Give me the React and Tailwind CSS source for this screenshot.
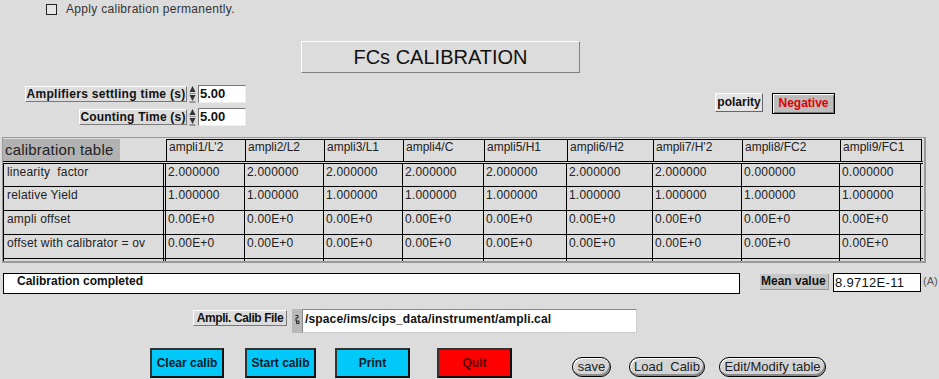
import React from "react";

const cols = [
  { name: "ampli1/L'2", w: 79, lin: "2.000000" },
  { name: "ampli2/L2", w: 79, lin: "2.000000" },
  { name: "ampli3/L1", w: 79, lin: "2.000000" },
  { name: "ampli4/C", w: 81, lin: "2.000000" },
  { name: "ampli5/H1", w: 83, lin: "2.000000" },
  { name: "ampli6/H2", w: 86, lin: "2.000000" },
  { name: "ampli7/H'2", w: 89, lin: "2.000000" },
  { name: "ampli8/FC2", w: 98, lin: "0.000000" },
  { name: "ampli9/FC1", w: 82, lin: "0.000000" },
];

const rows = [
  { label: "linearity  factor", key: "lin" },
  { label: "relative Yield", key: "yield" },
  { label: "ampli offset", key: "off" },
  { label: "offset with calibrator = ov", key: "ov" },
];

const cellValue = (c, key) => {
  if (key === "lin") return c.lin;
  if (key === "yield") return "1.000000";
  return "0.00E+0";
};

const Spinner = () => (
  <svg width="7" height="18" viewBox="0 0 7 18" className="mx-[2px]">
    <polygon points="3.5,1 6.5,7 0.5,7" fill="#333" />
    <rect x="0.5" y="8" width="6" height="1" fill="#888" />
    <polygon points="0.5,10 6.5,10 3.5,16" fill="#333" />
    <rect x="0.5" y="16.5" width="6" height="1" fill="#555" />
  </svg>
);

const Bevel = ({ children, className = "" }) => (
  <div className={`whitespace-nowrap overflow-hidden border border-t-white border-l-white border-b-[#7a7a7a] border-r-[#7a7a7a] ${className}`}>
    {children}
  </div>
);

const NumInput = ({ value }) => (
  <div className="w-[48px] h-[18px] bg-white border border-t-[#777] border-l-[#777] border-b-[#eee] border-r-[#eee] text-[13px] font-bold leading-[16px] pl-[1px] text-[#111]">
    {value}
  </div>
);

const BigBtn = ({ label, w, red }) => (
  <div
    className={`h-[30px] border-2 border-t-[#333] border-l-[#333] border-b-[#111] border-r-[#111] flex items-center justify-center text-[12px] font-bold ${
      red ? "bg-[#ff0000] text-[#5a0000]" : "bg-[#00c8f8] text-[#0a1a2a]"
    }`}
    style={{ width: w }}
  >
    {label}
  </div>
);

const RoundBtn = ({ label, w }) => (
  <div
    className="h-[20px] rounded-full border border-black bg-[#d4d4d4] shadow-[inset_-1px_-2px_0_#8a8a8a,inset_1px_1px_0_#fff] flex items-center justify-center text-[13px] text-[#222] whitespace-pre"
    style={{ width: w }}
  >
    {label}
  </div>
);

export default function App() {
  return (
    <div className="w-[939px] h-[379px] bg-[#dcdcdc] overflow-hidden font-['Liberation_Sans',Arial,sans-serif] text-[#222] flex flex-col">
      {/* checkbox */}
      <div className="h-[16px] flex items-center pl-[46px] pt-[2px]">
        <div className="w-[11px] h-[11px] border border-[#222] bg-[#e6e6e6]" />
        <span className="ml-[9px] text-[12px] tracking-[0.3px] text-[#333]">Apply calibration permanently.</span>
      </div>

      {/* title */}
      <div className="mt-[25px] ml-[301px] w-[279px] h-[32px] border border-t-white border-l-white border-b-[#808080] border-r-[#808080] flex items-center justify-center text-[20px] text-[#111]">
        FCs CALIBRATION
      </div>

      {/* settings */}
      <div className="mt-[12px] flex">
        <div className="w-[246px] flex flex-col items-end gap-[5px]">
          <div className="flex items-center h-[18px]">
            <Bevel className="w-[162px] h-[16px] text-center text-[12px] font-bold leading-[14px] tracking-[0.3px] text-[#111]">Amplifiers settling time (s)</Bevel>
            <Spinner />
            <NumInput value="5.00" />
          </div>
          <div className="flex items-center h-[18px]">
            <Bevel className="w-[108px] h-[16px] text-center text-[12px] font-bold leading-[14px] tracking-[0.2px] text-[#111]">Counting Time (s)</Bevel>
            <Spinner />
            <NumInput value="5.00" />
          </div>
        </div>
        <div className="ml-[469px] mt-[8px] flex items-start">
          <div className="h-[19px] w-[48px] bg-[#e4e4e4] border border-t-white border-l-white border-b-[#666] border-r-[#666] text-[12px] font-bold leading-[17px] text-center text-[#111]">
            polarity
          </div>
          <div className="ml-[9px] h-[21px] w-[63px] bg-[#bdbdbd] border border-black shadow-[inset_1px_1px_0_#fff,inset_-1px_-1px_0_#777] text-[12px] font-bold leading-[19px] text-center text-[#e00000]">
            Negative
          </div>
        </div>
      </div>

      {/* table */}
      <div className="mt-[11px] ml-[2px] w-[924px] h-[126px] border border-[#9a9a9a] border-r-2 border-b-2 overflow-hidden text-[12px] text-[#222]">
        <div className="flex h-[23px] pt-[1px]">
          <div className="w-[163px] h-[22px]">
            <div className="w-[117px] h-[22px] bg-[#b2b2b2] text-[15px] leading-[22px] pl-[2px] text-[#222] tracking-[0.2px]">
              calibration table
            </div>
          </div>
          {cols.map((c, i) => (
            <div
              key={c.name}
              className={`h-[22px] border-l border-t border-black pl-[2px] leading-[15px] ${i === cols.length - 1 ? "border-r" : ""}`}
              style={{ width: c.w }}
            >
              {c.name}
            </div>
          ))}
        </div>
        <div className="h-[3px] w-[920px] border-t border-b border-black" />
        {rows.map((r, ri) => (
          <div key={r.key} className={`flex ${ri === 0 ? "h-[23px]" : "h-[24px]"} w-[920px] border-b border-black`}>
            <div className="w-[160px] border-l border-black pl-[3px] leading-[17px] whitespace-pre tracking-[0.2px]">{r.label}</div>
            <div className="w-[3px] border-l border-r border-black" />
            {cols.map((c, i) => (
              <div
                key={c.name}
                className={`pl-[2px] leading-[17px] tracking-[0.2px] ${i === 0 ? "" : "border-l border-black"} ${i === cols.length - 1 ? "border-r border-black" : ""}`}
                style={{ width: i === 0 ? c.w - 1 : c.w }}
              >
                {cellValue(c, r.key)}
              </div>
            ))}
          </div>
        ))}
        <div className="flex h-[4px] w-[920px]">
          <div className="w-[160px] border-l border-black" />
          <div className="w-[3px] border-l border-r border-black" />
          {cols.map((c, i) => (
            <div
              key={c.name}
              className={`${i === 0 ? "" : "border-l border-black"} ${i === cols.length - 1 ? "border-r border-black" : ""}`}
              style={{ width: i === 0 ? c.w - 1 : c.w }}
            />
          ))}
        </div>
      </div>

      {/* status */}
      <div className="mt-[10px] flex items-start">
        <div className="ml-[3px] w-[737px] h-[21px] bg-white border border-black text-[12px] font-bold leading-[14px] pl-[13px] text-[#111]">
          Calibration completed
        </div>
        <div className="ml-[20px] mt-[1px] h-[16px] w-[69px] bg-[#c6c6c6] border-r border-b border-[#999] text-[12px] font-bold leading-[15px] pl-[1px] text-[#111]">
          Mean value
        </div>
        <div className="ml-[4px] w-[88px] h-[19px] bg-white border border-black text-[13px] leading-[17px] pl-[1px] tracking-[0.3px] text-[#111]">
          8.9712E-11
        </div>
        <span className="ml-[2px] text-[11px] leading-[16px] text-[#555]">(A)</span>
      </div>

      {/* calib file */}
      <div className="mt-[15px] flex items-start">
        <Bevel className="ml-[193px] mt-[1px] w-[94px] h-[16px] text-center text-[12px] font-bold leading-[14px] tracking-[-0.4px] text-[#111]">Ampli. Calib File</Bevel>
        <div className="ml-[5px] w-[10px] h-[24px] bg-[#b8b8b8] flex justify-center pt-[6px]">
          <svg width="5" height="9" viewBox="0 0 5 9">
            <path d="M0.5 0.5 H3 V3 H1 V6 H4 V8.5 H1.5 V6" fill="none" stroke="#222" strokeWidth="1" />
          </svg>
        </div>
        <div className="w-[335px] h-[24px] bg-white border border-t-[#888] border-l-[#888] border-b-[#ccc] border-r-[#ccc] text-[12px] font-bold leading-[18px] pl-[2px] tracking-[0.15px] text-[#111]">
          /space/ims/cips_data/instrument/ampli.cal
        </div>
      </div>

      {/* buttons */}
      <div className="mt-[15px] flex items-start">
        <div className="ml-[150px]"><BigBtn label="Clear calib" w={74} /></div>
        <div className="ml-[21px]"><BigBtn label="Start calib" w={71} /></div>
        <div className="ml-[19px]"><BigBtn label="Print" w={75} /></div>
        <div className="ml-[27px]"><BigBtn label="Quit" w={75} red /></div>
        <div className="ml-[60px] mt-[9px]"><RoundBtn label="save" w={39} /></div>
        <div className="ml-[18px] mt-[9px]"><RoundBtn label="Load  Calib" w={76} /></div>
        <div className="ml-[14px] mt-[9px]"><RoundBtn label="Edit/Modify table" w={107} /></div>
      </div>
    </div>
  );
}
